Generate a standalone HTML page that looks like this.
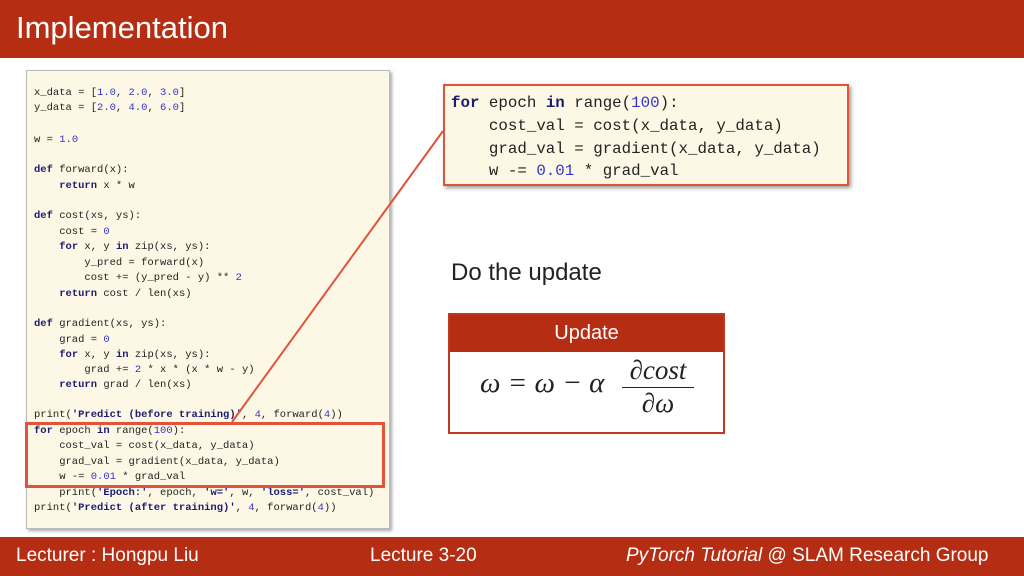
<!DOCTYPE html>
<html><head><meta charset="utf-8"><style>
*{margin:0;padding:0;box-sizing:border-box}
body{width:1024px;height:576px;position:relative;background:#fff;overflow:hidden;font-family:"Liberation Sans",sans-serif}
.hdr{position:absolute;left:0;top:0;width:1024px;height:58px;background:#b52d13;color:#fff;font-size:31px;padding:10px 0 0 16px}
.ftr{position:absolute;left:0;top:537px;width:1024px;height:39px;background:#b52d13;color:#fff;font-size:19px}
.ftr span{position:absolute;top:8px}
.code{position:absolute;left:26px;top:70px;width:364px;height:459px;background:#fdf8e6;border:1px solid #bbb;box-shadow:2px 2px 3px #aaa}
.ln{position:absolute;left:7px;font-family:"Liberation Mono",monospace;font-size:10.5px;line-height:15px;white-space:pre;color:#222}
b{color:#1c1c70}
i{font-style:normal;color:#3434c8}
.rb{position:absolute;left:443px;top:84px;width:406px;height:102px;background:#fdf8e6;border:2px solid #e0543a;box-shadow:2px 2px 4px #999}
.rl{position:absolute;left:6px;font-family:"Liberation Mono",monospace;font-size:15.8px;line-height:22px;white-space:pre;color:#222}
.lb{position:absolute;left:25px;top:422px;width:360px;height:66px;border:3px solid #e0543a}
</style></head><body>
<div class="hdr">Implementation</div>
<div class="code">
<div class="ln" style="top:15px">x_data = [<i>1.0</i>, <i>2.0</i>, <i>3.0</i>]</div>
<div class="ln" style="top:30px">y_data = [<i>2.0</i>, <i>4.0</i>, <i>6.0</i>]</div>
<div class="ln" style="top:62px">w = <i>1.0</i></div>
<div class="ln" style="top:92px"><b>def</b> forward(x):</div>
<div class="ln" style="top:108px">    <b>return</b> x * w</div>
<div class="ln" style="top:138px"><b>def</b> cost(xs, ys):</div>
<div class="ln" style="top:154px">    cost = <i>0</i></div>
<div class="ln" style="top:169px">    <b>for</b> x, y <b>in</b> zip(xs, ys):</div>
<div class="ln" style="top:185px">        y_pred = forward(x)</div>
<div class="ln" style="top:200px">        cost += (y_pred - y) ** <i>2</i></div>
<div class="ln" style="top:216px">    <b>return</b> cost / len(xs)</div>
<div class="ln" style="top:246px"><b>def</b> gradient(xs, ys):</div>
<div class="ln" style="top:262px">    grad = <i>0</i></div>
<div class="ln" style="top:277px">    <b>for</b> x, y <b>in</b> zip(xs, ys):</div>
<div class="ln" style="top:292px">        grad += <i>2</i> * x * (x * w - y)</div>
<div class="ln" style="top:307px">    <b>return</b> grad / len(xs)</div>
<div class="ln" style="top:337px">print(<b>'Predict (before training)'</b>, <i>4</i>, forward(<i>4</i>))</div>
<div class="ln" style="top:353px"><b>for</b> epoch <b>in</b> range(<i>100</i>):</div>
<div class="ln" style="top:368px">    cost_val = cost(x_data, y_data)</div>
<div class="ln" style="top:384px">    grad_val = gradient(x_data, y_data)</div>
<div class="ln" style="top:399px">    w -= <i>0.01</i> * grad_val</div>
<div class="ln" style="top:415px">    print(<b>'Epoch:'</b>, epoch, <b>'w='</b>, w, <b>'loss='</b>, cost_val)</div>
<div class="ln" style="top:430px">print(<b>'Predict (after training)'</b>, <i>4</i>, forward(<i>4</i>))</div>
</div>
<div class="lb"></div>
<svg style="position:absolute;left:0;top:0" width="1024" height="576"><line x1="443" y1="131" x2="232" y2="422" stroke="#e0543a" stroke-width="2"/></svg>
<div class="rb">
<div class="rl" style="top:6px"><b>for</b> epoch <b>in</b> range(<i>100</i>):</div>
<div class="rl" style="top:29px">    cost_val = cost(x_data, y_data)</div>
<div class="rl" style="top:52px">    grad_val = gradient(x_data, y_data)</div>
<div class="rl" style="top:74px">    w -= <i>0.01</i> * grad_val</div>
</div>
<div style="position:absolute;left:451px;top:259px;font-size:24px;color:#222">Do the update</div>
<div style="position:absolute;left:448px;top:313px;width:277px;height:121px;border:2px solid #c0391f;background:#fff">
<div style="height:37px;background:#b52d13;color:#fff;font-size:20px;text-align:center;line-height:37px">Update</div>
<div style="position:absolute;left:30px;top:52px;font-family:'Liberation Serif',serif;font-style:italic;font-size:29px;color:#222">ω = ω − α</div>
<div style="position:absolute;left:172px;top:40px;width:72px;text-align:center;font-family:'Liberation Serif',serif;font-style:italic;font-size:27px;color:#222;line-height:30px">∂cost<div style="border-top:1.5px solid #222;margin-top:2px"></div>∂ω</div>
</div>
<div class="ftr"><span style="left:16px">Lecturer : Hongpu Liu</span><span style="left:370px">Lecture 3-20</span><span style="left:626px"><em>PyTorch Tutorial</em> @ SLAM Research Group</span></div>
</body></html>
